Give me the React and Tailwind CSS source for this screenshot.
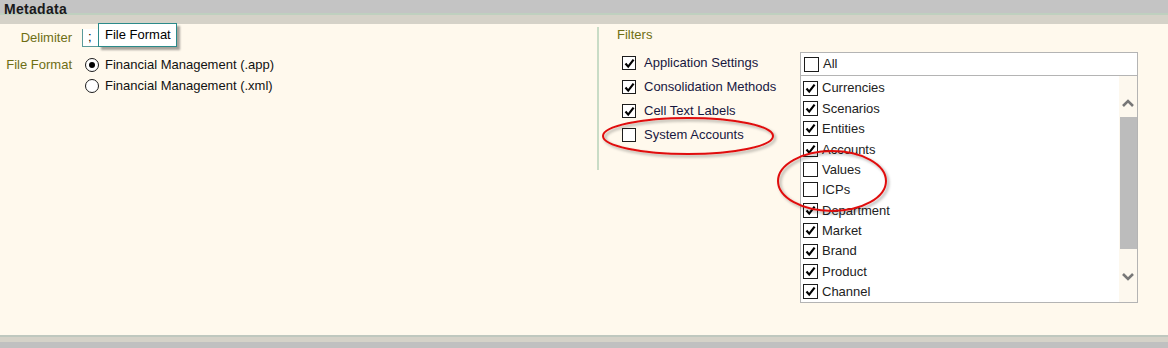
import React from "react";

const filters = [
  { label: "Application Settings", checked: true },
  { label: "Consolidation Methods", checked: true },
  { label: "Cell Text Labels", checked: true },
  { label: "System Accounts", checked: false },
];

const dims = [
  { label: "Currencies", checked: true },
  { label: "Scenarios", checked: true },
  { label: "Entities", checked: true },
  { label: "Accounts", checked: true },
  { label: "Values", checked: false },
  { label: "ICPs", checked: false },
  { label: "Department", checked: true },
  { label: "Market", checked: true },
  { label: "Brand", checked: true },
  { label: "Product", checked: true },
  { label: "Channel", checked: true },
];

function Check({ checked, size = 15 }) {
  return (
    <span
      className="inline-flex shrink-0 items-center justify-center border border-[#1c1c1c] bg-white"
      style={{ width: size, height: size }}
    >
      {checked && (
        <svg width="11" height="11" viewBox="0 0 11 11">
          <polyline
            points="1.5,5.5 4.2,8.6 9.6,1.6"
            fill="none"
            stroke="#000"
            strokeWidth="2.2"
          />
        </svg>
      )}
    </span>
  );
}

function Radio({ checked }) {
  return (
    <span className="inline-flex h-[14px] w-[14px] shrink-0 items-center justify-center rounded-full border border-[#1c1c1c] bg-white">
      {checked && <span className="h-[6px] w-[6px] rounded-full bg-black" />}
    </span>
  );
}

function Chevron({ up }) {
  return (
    <svg width="14" height="10" viewBox="0 0 14 10">
      <polyline
        points={up ? "2,8 7,3 12,8" : "2,2 7,7 12,2"}
        fill="none"
        stroke="#777"
        strokeWidth="2.6"
      />
    </svg>
  );
}

export default function App() {
  return (
    <div className="relative flex h-[348px] w-full flex-col overflow-hidden bg-[#fff9ed] font-['Liberation_Sans',sans-serif] text-[13px]">
      {/* section header */}
      <div className="h-[24px] shrink-0 bg-[#d5d2c8]">
        <div className="flex h-[13px] items-end bg-[#c4c4c4] pl-[4px]">
          <span className="translate-y-[3px] text-[14px] font-bold leading-none tracking-[0.3px] text-[#1a1a1a]">
            Metadata
          </span>
        </div>
        <div className="h-[2px] bg-[#bfd0bf]" />
      </div>

      <div className="flex flex-1">
        {/* left pane */}
        <div className="w-[597px] shrink-0 pt-[5px]">
          <div className="grid grid-cols-[72px_auto] items-center gap-x-[10px] gap-y-[10px] leading-[16px]">
            <span className="text-right text-[#6e6e14]">Delimiter</span>
            <div className="relative h-[18px] w-[16px] border-b border-l border-[#5a9a9a] bg-white pl-[5px] leading-[16px] text-black">
              ;
              <div className="absolute left-[15px] top-[-6px] z-10 whitespace-nowrap border border-[#2a8a8a] bg-white pl-[6px] pr-[5px] py-[3px] leading-[16px] text-black shadow-[3px_3px_2px_rgba(0,0,0,0.35)]">
                File Format
              </div>
            </div>
            <span className="self-start text-right text-[#6e6e14]">File Format</span>
            <div className="flex flex-col gap-[5px] pl-[3px]">
              <label className="flex h-[16px] items-center gap-[6px] text-[#111]">
                <Radio checked />
                Financial Management (.app)
              </label>
              <label className="flex h-[16px] items-center gap-[6px] text-[#111]">
                <Radio />
                Financial Management (.xml)
              </label>
            </div>
          </div>
        </div>

        <div className="mt-[3px] h-[143px] w-[2px] shrink-0 bg-[#c9dcc6]" />

        {/* filters */}
        <div className="relative flex flex-1 pt-[4px]">
          <div className="w-[201px] shrink-0 pl-[18px]">
            <div className="leading-[14px] text-[#6e6e14]">Filters</div>
            <div className="mt-[14px] flex flex-col gap-[10px] pl-[5px]">
              {filters.map((f) => (
                <label
                  key={f.label}
                  className="flex h-[14px] items-center gap-[8px] text-[#17173f]"
                >
                  <Check checked={f.checked} size={14} />
                  {f.label}
                </label>
              ))}
            </div>
          </div>

          <div className="mt-[24px] w-[338px] shrink-0">
            <div className="flex h-[24px] items-center gap-[4px] border border-[#b4b4b4] bg-white pl-[3px] text-[#222]">
              <Check />
              All
            </div>
            <div className="flex h-[227px] border-x border-b border-[#b4b4b4]">
              <div className="flex flex-1 flex-col bg-white pl-[2px] pt-[2px]">
                {dims.map((d) => (
                  <div
                    key={d.label}
                    className="flex h-[20.4px] items-center gap-[4px] text-[#222]"
                  >
                    <Check checked={d.checked} />
                    {d.label}
                  </div>
                ))}
              </div>
              <div className="flex w-[18px] flex-col items-center bg-[#fdf8ee] pt-[22px]">
                <Chevron up />
                <div className="mt-[9px] h-[132px] w-[17px] bg-[#bcbcbc]" />
                <div className="mt-[23px]">
                  <Chevron />
                </div>
              </div>
            </div>
          </div>
        </div>
      </div>

      {/* footer */}
      <div className="h-[13px] shrink-0 border-t-[2px] border-[#bfc8bf] bg-[#d5d2c8]">
        <div className="mt-[5px] h-[6px] bg-[#c0c0c0]" />
      </div>

      {/* annotations */}
      <svg
        className="pointer-events-none absolute left-0 top-0"
        width="1168"
        height="348"
      >
        <defs>
          <filter id="sh" x="-10%" y="-10%" width="130%" height="130%">
            <feDropShadow dx="2" dy="2" stdDeviation="1.5" floodColor="#000" floodOpacity="0.35" />
          </filter>
        </defs>
        <ellipse cx="688" cy="136" rx="85" ry="18" fill="none" stroke="#e01010" strokeWidth="2" filter="url(#sh)" />
        <ellipse cx="832" cy="181" rx="54" ry="30" fill="none" stroke="#e01010" strokeWidth="2" filter="url(#sh)" />
      </svg>
    </div>
  );
}
